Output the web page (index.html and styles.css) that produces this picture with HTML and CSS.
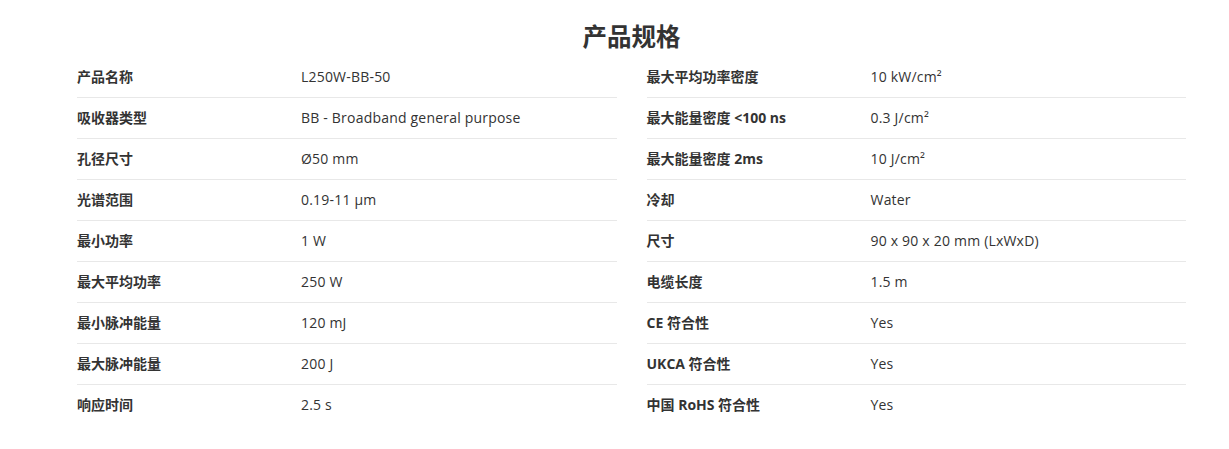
FILE: index.html
```html
<!DOCTYPE html>
<html lang="zh">
<head>
<meta charset="utf-8">
<title>产品规格</title>
<link rel="stylesheet" href="styles.css">
</head>
<body>
<section class="specs">
  <h2 class="specs-title">产品规格</h2>
  <div class="specs-grid">
    <table class="spec-table">
      <tr><th>产品名称</th><td>L250W-BB-50</td></tr>
      <tr><th>吸收器类型</th><td>BB - Broadband general purpose</td></tr>
      <tr><th>孔径尺寸</th><td>Ø50 mm</td></tr>
      <tr><th>光谱范围</th><td>0.19-11 µm</td></tr>
      <tr><th>最小功率</th><td>1 W</td></tr>
      <tr><th>最大平均功率</th><td>250 W</td></tr>
      <tr><th>最小脉冲能量</th><td>120 mJ</td></tr>
      <tr><th>最大脉冲能量</th><td>200 J</td></tr>
      <tr><th>响应时间</th><td>2.5 s</td></tr>
    </table>
    <table class="spec-table">
      <tr><th>最大平均功率密度</th><td>10 kW/cm²</td></tr>
      <tr><th>最大能量密度 &lt;100 ns</th><td>0.3 J/cm²</td></tr>
      <tr><th>最大能量密度 2ms</th><td>10 J/cm²</td></tr>
      <tr><th>冷却</th><td>Water</td></tr>
      <tr><th>尺寸</th><td>90 x 90 x 20 mm (LxWxD)</td></tr>
      <tr><th>电缆长度</th><td>1.5 m</td></tr>
      <tr><th>CE 符合性</th><td>Yes</td></tr>
      <tr><th>UKCA 符合性</th><td>Yes</td></tr>
      <tr><th>中国 RoHS 符合性</th><td>Yes</td></tr>
    </table>
  </div>
</section>
</body>
</html>
```
FILE: styles.css
```css
html, body {
  margin: 0;
  padding: 0;
  background: #ffffff;
}
body {
  font-family: "Open Sans", "Noto Sans", "Noto Sans CJK SC", sans-serif;
  color: #333333;
  font-size: 14px;
}
.specs {
  width: 1109px;
  margin: 0 0 0 77px;
  padding-top: 19px;
}
.specs-title {
  margin: 0;
  text-align: center;
  font-size: 24.5px;
  font-weight: 700;
  line-height: 36px;
  color: #333333;
}
.specs-grid {
  display: grid;
  grid-template-columns: 1fr 1fr;
  column-gap: 30px;
  margin-top: 2px;
}
.spec-table {
  width: 100%;
  border-collapse: collapse;
  table-layout: fixed;
}
.spec-table th,
.spec-table td {
  height: 40px;
  padding: 0;
  text-align: left;
  vertical-align: middle;
  line-height: 20px;
  border-bottom: 1px solid #e8e8e8;
}
.spec-table th {
  width: 224px;
  font-size: 14px;
  font-weight: 700;
}
.spec-table td {
  font-size: 14px;
  letter-spacing: 0.2px;
  font-weight: 400;
}
.spec-table tr:last-child th,
.spec-table tr:last-child td {
  border-bottom: none;
}
```
